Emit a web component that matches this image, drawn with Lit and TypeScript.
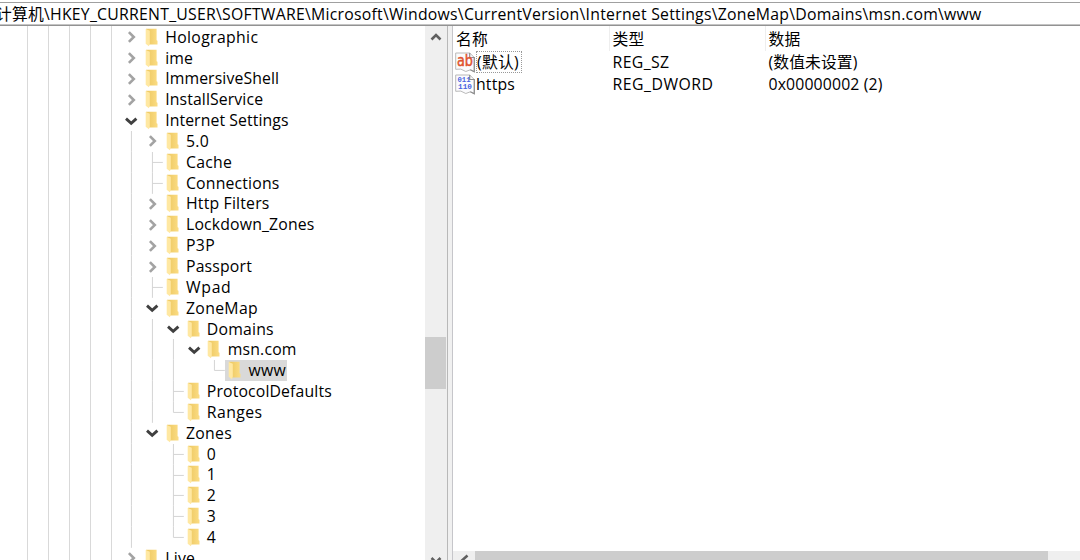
import { LitElement, html, svg, css } from "lit";
import { customElement } from "lit/decorators.js";

const FONT = '15.8px "Open Sans", "Noto Sans CJK SC", sans-serif';
const ruler = document.createElement("canvas").getContext("2d")!;

// Letter spacing that makes a label occupy the given width.
const fit = (text: string, width: number) => {
  ruler.font = FONT;
  return `letter-spacing:${((width - ruler.measureText(text).width) / text.length).toFixed(3)}px`;
};
const label = (text: string, width: number) => html`<span style=${fit(text, width)}>${text}</span>`;

type Row = [name: string, level: number, state: "closed" | "open" | "leaf", width: number, guides: string];

// Guides, one letter per level: "|" line, "t" tee, "l" elbow, "." nothing.
const rows: Row[] = [
  ["Holographic", 0, "closed", 93.2, ""],
  ["ime", 0, "closed", 28, ""],
  ["ImmersiveShell", 0, "closed", 114, ""],
  ["InstallService", 0, "closed", 98, ""],
  ["Internet Settings", 0, "open", 123.5, ""],
  ["5.0", 1, "closed", 23, "|"],
  ["Cache", 1, "leaf", 46, "|t"],
  ["Connections", 1, "leaf", 93.5, "|t"],
  ["Http Filters", 1, "closed", 83.5, "|"],
  ["Lockdown_Zones", 1, "closed", 128.5, "|"],
  ["P3P", 1, "closed", 29, "|"],
  ["Passport", 1, "closed", 66, "|"],
  ["Wpad", 1, "leaf", 45.5, "|t"],
  ["ZoneMap", 1, "open", 72, "|"],
  ["Domains", 2, "open", 67, "||"],
  ["msn.com", 3, "open", 69, "|||"],
  ["www", 4, "leaf", 37.5, "|||.l"],
  ["ProtocolDefaults", 2, "leaf", 125, "||t"],
  ["Ranges", 2, "leaf", 55.5, "||l"],
  ["Zones", 1, "open", 46, "|"],
  ["0", 2, "leaf", 9, "|.t"],
  ["1", 2, "leaf", 9, "|.t"],
  ["2", 2, "leaf", 9, "|.t"],
  ["3", 2, "leaf", 9, "|.t"],
  ["4", 2, "leaf", 9, "|.l"],
  ["Live", 0, "closed", 30, ""],
];

const chevron = (kind: string) => html`<svg class="chev ${kind}" width="14" height="14" viewBox="0 0 14 14">
  <path d=${kind === "open" ? "M2 4.7 7.2 9.3l5.2-4.6" : "M4.9 2.1 9.8 7l-4.9 4.9"} />
</svg>`;

const folder = html`<svg class="folder" width="13" height="19" viewBox="0 0 13 19">
  <defs><linearGradient id="g"><stop offset=".2" stop-color="#efcb66" /><stop offset="1" stop-color="#fbdc83" /></linearGradient></defs>
  <path d="M1 .8h10.6v11.4l.9.5v3.8H4z" fill="url(#g)" />
  <path d="M.7 1 4.8 2.8v12.6L3.9 18.2.7 15.8z" fill="#ffe8a2" />
</svg>`;

const page = svg`<path d="M.7 1h14l4.6 4.5v14.2l-4-1.9-4.5 1.7-5-2.4-5.1.2z" fill="#fbfbfd" stroke="#b9b9b9" />
  <path d="M14.7 1v4.5h4.6v14.2l-4-1.9" fill="none" stroke="#8d8d8d" stroke-width="1.2" />`;

@customElement("app-root")
export class AppRoot extends LitElement {
  static styles = css`
    :host { display: flex; flex-direction: column; width: 1080px; height: 560px; overflow: hidden; background: #fff; color: #000; font: 15.8px/21px "Open Sans", "Noto Sans CJK SC", sans-serif; white-space: pre; }
    * { box-sizing: border-box; }
    .address { flex: none; height: 26px; background: linear-gradient(#fff 2px, #a0a0a0 2px, #a0a0a0 3px, #fff 3px, #fff 24px, #c4c4c4 24px, #c4c4c4 25px, #929292 25px); padding-top: 4px; overflow: hidden; }
    .address .path { display: flex; margin-left: -4px; }
    .body { display: flex; flex: 1; min-height: 0; }
    .tree { width: 425px; display: flex; overflow: hidden; }
    .trunks { flex: none; width: 121px; padding-left: 27px; display: flex; gap: 19.9px; }
    .trunks i { width: 1px; background: #d9d9d9; }
    .rows { flex: 1; min-width: 0; padding-top: 0.8px; }
    .row { display: flex; align-items: center; height: 20.85px; }
    .guide { flex: none; width: 20.85px; height: 100%; display: block; }
    .guide path { stroke: #d4d4d4; stroke-width: 1; fill: none; }
    .slot { flex: none; width: 20.85px; height: 100%; display: flex; align-items: center; justify-content: center; }
    .chev path { fill: none; stroke: #a3a3a3; stroke-width: 2.6; }
    .chev.open path { stroke: #404040; stroke-width: 2.9; }
    .item { display: flex; align-items: center; height: 21px; padding-left: 3px; }
    .item.selected { background: #d9d9d9; padding-right: 1px; }
    .folder { margin-right: 7.3px; }
    .vscroll { flex: none; width: 22px; background: #efefef; display: flex; flex-direction: column; align-items: center; }
    .vscroll > * { flex: none; }
    .vscroll .up { margin-top: 5px; }
    .vscroll .thumb { width: 21px; margin-right: 1px; height: 52px; background: #cdcdcd; margin-top: 294px; }
    .vscroll .down { margin-top: 165px; }
    .bar path { fill: none; stroke: #606060; stroke-width: 2.6; }
    .split { flex: none; width: 6px; background: #f0f0f0; border-left: 1px solid #b8b8b8; border-right: 1px solid #c6c6ca; }
    .list { flex: 1; display: flex; flex-direction: column; }
    .line { display: grid; grid-template-columns: 156.5px 156px 1fr; height: 22px; align-items: center; padding-left: 3px; }
    .head { height: 25px; }
    .head > div { height: 25px; line-height: 27px; }
    .head > div:not(:last-child) { border-right: 1px solid #eee; margin-right: 3px; }
    .name { display: flex; align-items: center; margin-left: -1px; }
    .focus { border: 1px dotted #999; height: 22px; line-height: 20px; padding-right: 2px; }
    .hscroll { margin-top: auto; height: 9px; display: flex; background: #efefef; }
    .hscroll .left { width: 22px; height: 9px; }
    .hscroll .thumb { width: 573px; background: #cdcdcd; }
    .ab { font: 15px "DejaVu Sans", sans-serif; fill: #e0522d; stroke: #e0522d; stroke-width: 0.5; }
    .bin { font: bold 8px "Liberation Mono", monospace; fill: #4763e0; }
  `;

  private guide(kind: string) {
    const d: Record<string, string> = { "|": "M10.5 0V21", t: "M10.5 0V21M10.5 10.5H21", l: "M10.5 0V10.5H21", ".": "" };
    return html`<svg class="guide" viewBox="0 0 21 21" preserveAspectRatio="none"><path d=${d[kind]} /></svg>`;
  }

  private row([name, level, state, width, guides]: Row) {
    return html`<div class="row">
      ${[...guides].map((g) => this.guide(g))}
      ${state === "leaf" ? "" : html`<div class="slot">${chevron(state)}</div>`}
      <div class="item ${name === "www" ? "selected" : ""}">${folder}${label(name, width)}</div>
    </div>`;
  }

  render() {
    return html`
      <div class="address"><div class="path">${label("计算机\\", 54)}${label("HKEY_CURRENT_USER\\SOFTWARE\\Microsoft\\Windows\\CurrentVersion\\Internet Settings\\ZoneMap\\Domains\\msn.com\\www", 931.5)}</div></div>
      <div class="body">
        <div class="tree">
          <div class="trunks"><i></i><i></i><i></i><i></i><i></i></div>
          <div class="rows">${rows.map((r) => this.row(r))}</div>
        </div>
        <div class="vscroll">
          <svg class="bar up" width="14" height="12" viewBox="0 0 14 12"><path d="M2.5 8.5 7 4l4.5 4.5" /></svg>
          <div class="thumb"></div>
          <svg class="bar down" width="14" height="12" viewBox="0 0 14 12"><path d="M2.5 4 7 8.5 11.5 4" /></svg>
        </div>
        <div class="split"></div>
        <div class="list">
          <div class="line head"><div>${label("名称", 32)}</div><div>${label("类型", 32)}</div><div>${label("数据", 32)}</div></div>
          <div class="line">
            <div class="name"><svg width="21" height="21" viewBox="0 0 21 21">${page}<text class="ab" x="2" y="14" textLength="16" lengthAdjust="spacingAndGlyphs">ab</text></svg><div class="focus">${label("(默认)", 42)}</div></div>
            <div>${label("REG_SZ", 57)}</div><div>${label("(数值未设置)", 89)}</div>
          </div>
          <div class="line">
            <div class="name"><svg width="21" height="21" viewBox="0 0 21 21">${page}<text class="bin" x="2.5" y="8.3" textLength="13" lengthAdjust="spacingAndGlyphs">011</text><text class="bin" x="3" y="15.2" textLength="14" lengthAdjust="spacingAndGlyphs">110</text></svg>${label("https", 39)}</div>
            <div>${label("REG_DWORD", 101)}</div><div>${label("0x00000002 (2)", 114)}</div>
          </div>
          <div class="hscroll">
            <svg class="bar left" viewBox="0 0 22 9"><path d="M14.5 4.5 9.5 9l5 4.5" /></svg>
            <div class="thumb"></div>
          </div>
        </div>
      </div>`;
  }
}
